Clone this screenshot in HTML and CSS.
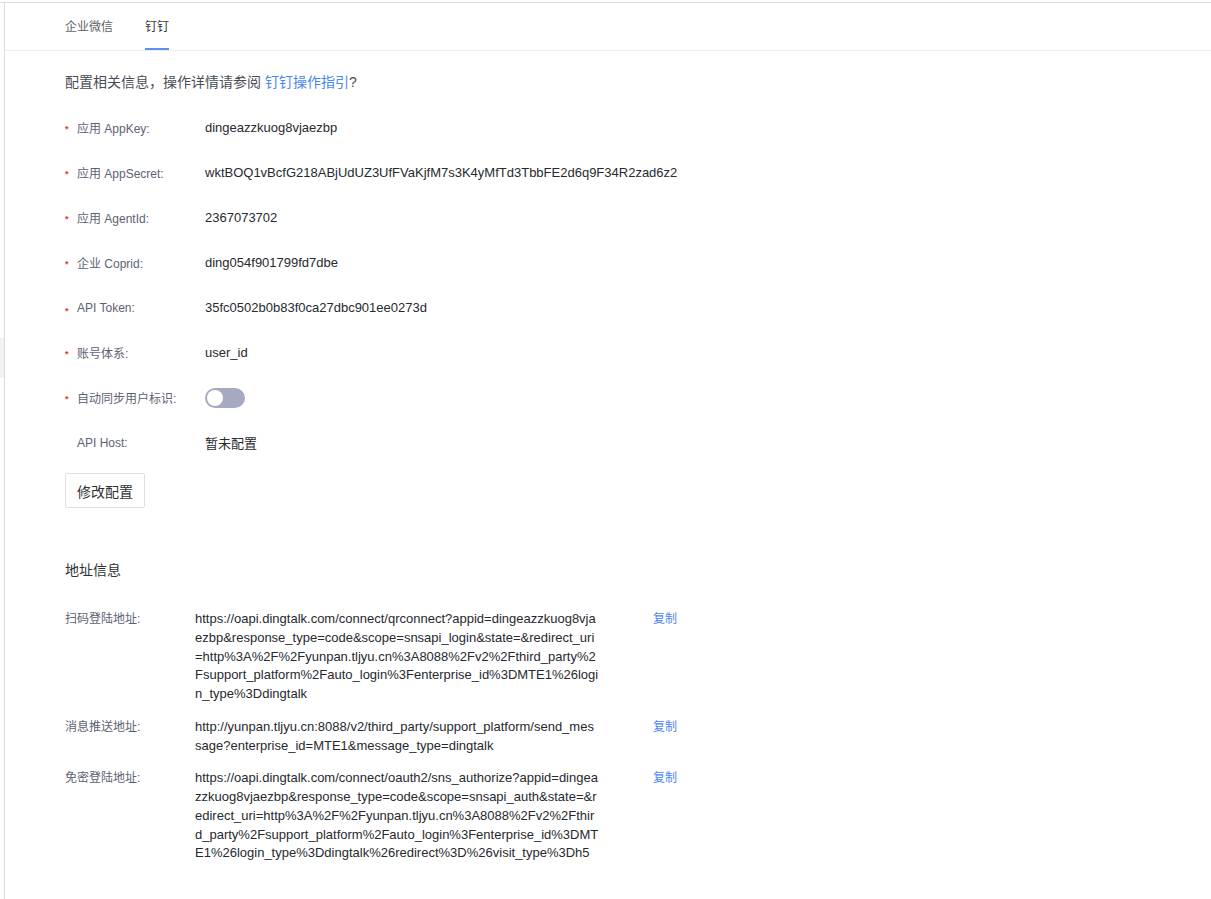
FILE: index.html
```html
<!DOCTYPE html>
<html lang="zh-CN">
<head>
<meta charset="utf-8">
<title>钉钉配置</title>
<link rel="stylesheet" href="styles.css">
</head>
<body>
<div class="frame">
  <div class="gutter"><div class="gutter-mark"></div></div>
  <div class="panel">
    <div class="tabs">
      <div class="tab">企业微信</div>
      <div class="tab active">钉钉</div>
    </div>
    <div class="content">
      <p class="intro">配置相关信息，操作详情请参阅 <a class="link">钉钉操作指引</a>?</p>
      <div class="form">
        <div class="row"><div class="label req">应用 AppKey:</div><div class="value">dingeazzkuog8vjaezbp</div></div>
        <div class="row"><div class="label req">应用 AppSecret:</div><div class="value">wktBOQ1vBcfG218ABjUdUZ3UfFVaKjfM7s3K4yMfTd3TbbFE2d6q9F34R2zad6z2</div></div>
        <div class="row"><div class="label req">应用 AgentId:</div><div class="value">2367073702</div></div>
        <div class="row"><div class="label req">企业 Coprid:</div><div class="value">ding054f901799fd7dbe</div></div>
        <div class="row"><div class="label req">API Token:</div><div class="value">35fc0502b0b83f0ca27dbc901ee0273d</div></div>
        <div class="row"><div class="label req">账号体系:</div><div class="value">user_id</div></div>
        <div class="row"><div class="label req">自动同步用户标识:</div><div class="value"><span class="switch"><span class="knob"></span></span></div></div>
        <div class="row"><div class="label">API Host:</div><div class="value">暂未配置</div></div>
      </div>
      <button class="btn">修改配置</button>

      <h3 class="section-title">地址信息</h3>
      <div class="addr-list">
        <div class="addr">
          <div class="addr-label">扫码登陆地址:</div>
          <div class="addr-value">https://oapi.dingtalk.com/connect/qrconnect?appid=dingeazzkuog8vjaezbp&amp;response_type=code&amp;scope=snsapi_login&amp;state=&amp;redirect_uri=http%3A%2F%2Fyunpan.tljyu.cn%3A8088%2Fv2%2Fthird_party%2Fsupport_platform%2Fauto_login%3Fenterprise_id%3DMTE1%26login_type%3Ddingtalk</div>
          <a class="copy">复制</a>
        </div>
        <div class="addr">
          <div class="addr-label">消息推送地址:</div>
          <div class="addr-value">http://yunpan.tljyu.cn:8088/v2/third_party/support_platform/send_message?enterprise_id=MTE1&amp;message_type=dingtalk</div>
          <a class="copy">复制</a>
        </div>
        <div class="addr">
          <div class="addr-label">免密登陆地址:</div>
          <div class="addr-value">https://oapi.dingtalk.com/connect/oauth2/sns_authorize?appid=dingeazzkuog8vjaezbp&amp;response_type=code&amp;scope=snsapi_auth&amp;state=&amp;redirect_uri=http%3A%2F%2Fyunpan.tljyu.cn%3A8088%2Fv2%2Fthird_party%2Fsupport_platform%2Fauto_login%3Fenterprise_id%3DMTE1%26login_type%3Ddingtalk%26redirect%3D%26visit_type%3Dh5</div>
          <a class="copy">复制</a>
        </div>
      </div>
    </div>
  </div>
</div>
</body>
</html>
```

FILE: styles.css
```css
* { box-sizing: border-box; }

html, body {
  margin: 0;
  padding: 0;
  background: #ffffff;
  font-family: "Liberation Sans", "Noto Sans CJK SC", sans-serif;
  color: #303133;
}

body { padding-top: 2px; }

.frame {
  display: flex;
  border-top: 1px solid #dcdcdc;
  min-height: 897px;
}

.gutter {
  width: 4px;
  flex: none;
  padding-top: 335px;
}

.gutter-mark {
  height: 40px;
  background: #f0f2f6;
}

.panel {
  flex: 1;
  border-left: 1px solid #dcdcdc;
}

.tabs {
  display: flex;
  gap: 32px;
  padding-left: 60px;
  height: 48px;
  border-bottom: 1px solid #eeeeee;
}

.tab {
  font-size: 12px;
  color: #606266;
  height: 47px;
  padding-top: 14px;
  line-height: 20px;
  border-bottom: 2px solid transparent;
}

.tab.active {
  color: #303133;
  border-bottom-color: #5b8ff9;
}

.content {
  padding-left: 60px;
}

.intro {
  margin: 21px 0 0;
  font-size: 14px;
  line-height: 20px;
  color: #4a4d55;
}

.link {
  color: #4a86f2;
  text-decoration: none;
}

.form {
  margin-top: 13px;
}

.row {
  display: flex;
  align-items: center;
  height: 45px;
}

.label {
  width: 140px;
  flex: none;
  font-size: 12px;
  color: #5d6273;
  padding-left: 12px;
  position: relative;
}

.label.req::before {
  content: "*";
  position: absolute;
  left: 0;
  top: 5px;
  color: #e8342c;
  font-size: 9px;
  font-weight: bold;
}

.value {
  font-size: 13px;
  color: #27292e;
  display: flex;
  align-items: center;
}

.switch {
  display: inline-block;
  width: 40px;
  height: 20px;
  border-radius: 10px;
  background: #a6aac0;
  position: relative;
}

.knob {
  position: absolute;
  left: 2px;
  top: 2px;
  width: 16px;
  height: 16px;
  border-radius: 50%;
  background: #ffffff;
}

.btn {
  margin-top: 8px;
  width: 80px;
  height: 35px;
  border: 1px solid #dcdfe6;
  border-radius: 2px;
  background: #ffffff;
  font-family: inherit;
  font-size: 14px;
  color: #303133;
  padding: 0;
  display: block;
}

.section-title {
  margin: 52px 0 0;
  font-size: 14px;
  font-weight: normal;
  line-height: 20px;
  color: #303133;
}

.addr-list {
  margin-top: 30px;
}

.addr {
  display: flex;
  align-items: flex-start;
  margin-bottom: 14px;
}

.addr-label {
  width: 130px;
  flex: none;
  font-size: 12px;
  line-height: 18.75px;
  color: #5d6273;
}

.addr-value {
  width: 405px;
  flex: none;
  font-size: 13px;
  line-height: 18.75px;
  word-break: break-all;
  color: #27292e;
}

.copy {
  margin-left: 53px;
  font-size: 12px;
  line-height: 18.75px;
  color: #4a86f2;
  text-decoration: none;
}
```
